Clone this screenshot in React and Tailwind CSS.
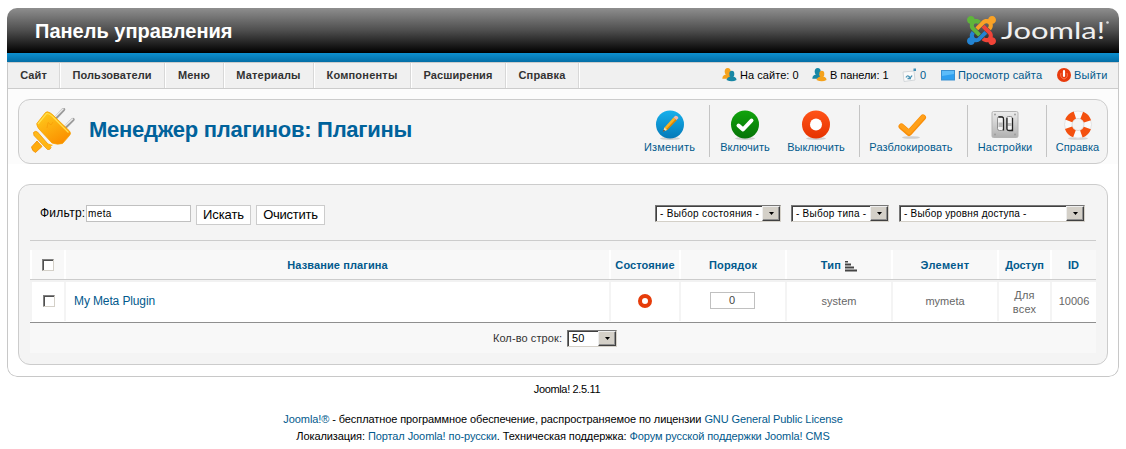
const menu = [
  { label: 'Сайт', box: 'w-[52px]', text: 'tracking-[0.1px]' },
  { label: 'Пользователи', box: 'w-[105px]', text: 'tracking-[0.1px]' },
  { label: 'Меню', box: 'w-[59px]', text: 'tracking-[0.2px]' },
  { label: 'Материалы', box: 'w-[90px]', text: 'tracking-[0.15px]' },
  { label: 'Компоненты', box: 'w-[97px]', text: 'tracking-[0.2px]' },
  { label: 'Расширения', box: 'w-[95px]', text: 'tracking-[0.1px]' },
  { label: 'Справка', box: 'w-[73px]', text: 'tracking-[0.2px]' },
];

function JoomlaMark() {
  return (
    <svg viewBox="0 32 448 448" className="h-[29px] w-[29px]">
      <path fill="#5fb53b" d="M.6 92.1C.6 58.8 27.4 32 60.4 32c30 0 54.5 21.900 59.200 50.200 32.600-7.600 67.100.6 96.500 30l-44.300 44.300c-20.500-20.500-42.600-16.300-55.400-3.500-14.300 14.300-14.300 37.900 0 52.200l99.500 99.500-44 44.300c-87.700-87.200-49.700-49.700-99.800-99.700-26.800-26.500-35-64.800-24.800-98.900C20.400 144.600.6 120.700.6 92.100z" />
      <path fill="#f9a226" d="M130.100 208.500l44.300 44.300c10-10 89.700-89.700 99.700-99.800 14.300-14.300 37.600-14.300 51.900 0 12.800 12.800 17 35-3.500 55.400l44 44.300c31.200-31.200 38.500-67.600 28.900-101.200 29.200-4.100 51.900-29.200 51.900-59.500 0-33.200-26.800-60.100-59.800-60.100-30.300 0-55.400 22.500-59.500 51.600-33.800-9.900-71.700-1.500-98.300 25.100-18.300 19.100-71.100 71.500-99.600 99.900z" />
      <path fill="#f04438" d="M396.400 360.700c8.200-32.700-.9-68.500-26.300-93.900-11.800-12.200 5 4.700-99.500-99.700l-44.300 44.300 99.700 99.700c14.300 14.300 14.300 37.600 0 51.900-12.800 12.800-35 17-55.400-3.500l-44 44.300c27.600 30.200 68 38.800 102.700 28 5.500 27.400 29.700 48.100 58.900 48.100 33 0 59.800-26.800 59.800-60.100 0-30.200-22.500-55-51.600-59.100z" />
      <path fill="#2384d3" d="M312.100 307.600l-44-44.300c-87 86.400-50.400 50.400-99.700 99.800-14.300 14.300-37.600 14.300-51.900 0-13.100-13.400-16.900-35.300 3.200-55.400l-44-44.300c-30.200 30.200-38 65.200-29.500 98.300-26.700 6-46.200 29.900-46.200 58.200C0 453.200 26.800 480 59.800 480c28.600 0 52.500-19.800 58.600-46.700 32.700 8.200 68.500-.6 94.200-26 32.100-32 12.200-12.400 99.500-99.700z" />
    </svg>
  );
}

function PlugIcon() {
  return (
    <svg viewBox="4 7 48 48" className="h-12 w-12">
      <defs>
        <linearGradient id="plug" x1="0" y1="0" x2="0.6" y2="1">
          <stop offset="0" stopColor="#ffcf1f" />
          <stop offset="1" stopColor="#fb9100" />
        </linearGradient>
      </defs>
      <g stroke="#9a9a9a" strokeWidth="3.400" strokeLinecap="round">
        <path d="M32 16.500 L39.500 8.500" />
        <path d="M41.500 26 L49 18.500" />
      </g>
      <g stroke="#ececec" strokeWidth="1.600" strokeLinecap="round">
        <path d="M31.500 15.500 L39 8" />
        <path d="M41 25 L48.500 18" />
      </g>
      <path d="M13 40 L7.500 46 Q8 50 11.500 51.500 L18 45.500 Z" fill="#ffab0c" stroke="#f08c00" strokeWidth="0.800" />
      <path d="M9.500 31.500 Q11.500 29.500 13.500 31 L27 46.500 Q26.500 49 23.500 48.500 L10 34.500 Z" fill="#ffb91a" stroke="#f39400" strokeWidth="0.800" />
      <path d="M12.700 22.700 L21.500 11.500 Q23 10 26 11.800 Q29 13.500 31 16 L45.500 30 Q47.500 32.500 45.500 34.500 L38.500 42.500 Q33 44 28 42 L14.500 27.500 Q13 25 12.700 22.700 Z" fill="url(#plug)" stroke="#f6a000" strokeWidth="0.800" />
      <path d="M12 33 L19 41 L29 44 L24 47.500 Z" fill="#ffb414" />
      <path d="M12 43 L17 46" stroke="#ffab0c" strokeWidth="3" />
      <path d="M14 23 L22.500 12.500 Q26 12.500 30 17 L44.500 31.500" fill="none" stroke="#ffe04e" strokeWidth="1.200" />
      <path d="M23 27 L24 21.500 L27 24 L29 21" fill="none" stroke="#f28a00" strokeWidth="0.800" opacity="0.500" />
    </svg>
  );
}

function Users({ flip }) {
  const a = flip ? '#1787a5' : '#f5a21c';
  const b = flip ? '#f5a21c' : '#1787a5';
  return (
    <svg viewBox="0 0 15 14" className="h-[14px] w-[15px] shrink-0 -translate-y-px">
      <ellipse cx="5.700" cy="3.600" rx="3" ry="3.600" fill={a} />
      <path d="M0.300 10.700 Q0.500 7 4 6.500 H7 Q10 7 10 10.700 Z" fill={a} />
      <ellipse cx="9.800" cy="6" rx="2.500" ry="3.200" fill={b} />
      <path d="M4.500 12 Q5 9 8.500 8.500 H11 Q14.500 9 14.500 12 Q10 14.500 4.500 12 Z" fill={b} />
    </svg>
  );
}

function MailIcon() {
  return (
    <svg viewBox="0 0 15 14" className="h-[14px] w-[15px] shrink-0 -translate-y-px">
      <path d="M1 4 L12 3 L13 12 L2 13.500 Z" fill="#fafafa" stroke="#d3d7da" />
      <path d="M4 9.500 Q5 7 7 8.500 Q8.500 10.500 10 7.500 M5.500 10.500 H9" fill="none" stroke="#4b94b5" strokeWidth="1.300" />
      <rect x="11.500" y="0.500" width="2.500" height="2.500" fill="#3f8fb6" />
    </svg>
  );
}

function ScreenIcon() {
  return (
    <svg viewBox="0 0 14 11" className="h-[11px] w-[14px] shrink-0">
      <rect x="0.500" y="0.500" width="13" height="9.500" fill="#2f9ff0" stroke="#3a8fd0" />
      <path d="M1 1 H13 V4 L1 6 Z" fill="#5cbcfa" />
    </svg>
  );
}

function PowerIcon() {
  return (
    <svg viewBox="0 0 14 14" className="h-[14px] w-[14px] shrink-0 -translate-y-px">
      <circle cx="7" cy="7" r="7" fill="#e83a0c" />
      <path d="M7 3 V8" stroke="#fff" strokeWidth="2.200" strokeLinecap="round" />
      <path d="M4 5 Q2.500 9.500 7 11 Q11.500 9.500 10 5" fill="none" stroke="#ff8a63" strokeWidth="0.800" />
    </svg>
  );
}

function Disc({ id, from, to, children }) {
  return (
    <svg viewBox="0 0 32 32" className="h-8 w-8">
      <defs>
        <linearGradient id={id} x1="0" y1="0" x2="0" y2="1">
          <stop offset="0" stopColor={from} />
          <stop offset="1" stopColor={to} />
        </linearGradient>
      </defs>
      <ellipse cx="16" cy="29.500" rx="10" ry="1.500" fill="#cfcfcf" />
      <circle cx="16" cy="15.500" r="14" fill={`url(#${id})`} />
      {children}
    </svg>
  );
}

const EditIcon = () => (
  <Disc id="edit" from="#16b0ec" to="#0579b8">
    <path d="M9 22.500 L10.500 18.500 L19.500 8.500 L22.500 11 L13 21 Z" fill="#fbb321" />
    <path d="M12 20.500 L21.700 10 L22.700 11.200 L13.200 21 Z" fill="#d98304" />
    <path d="M19.500 8.500 L21.300 6.700 Q24.500 6.700 24.300 9.300 L22.500 11 Z" fill="#eeb6ad" />
    <path d="M9 22.500 L10.500 18.500 L13 21 Z" fill="#f0dcb4" />
    <path d="M8.800 22.700 L9.700 20.600 L11 21.800 Z" fill="#333" />
  </Disc>
);

const EnableIcon = () => (
  <Disc id="enable" from="#11a40d" to="#067307">
    <path d="M9.500 16.500 L14 20.500 L22.500 11.500" fill="none" stroke="#fff" strokeWidth="4" strokeLinecap="round" strokeLinejoin="round" />
  </Disc>
);

const DisableIcon = () => (
  <Disc id="disable" from="#ff5318" to="#e63300">
    <circle cx="16" cy="15.500" r="6" fill="#fff" />
  </Disc>
);

const CheckinIcon = () => (
  <svg viewBox="0 0 32 32" className="h-8 w-8">
    <ellipse cx="16" cy="28.500" rx="9" ry="1.300" fill="#cfcfcf" />
    <path d="M6.500 17.500 L14 24 L28 8.500" fill="none" stroke="#f98f0a" strokeWidth="6" strokeLinecap="round" strokeLinejoin="round" />
    <path d="M6.500 17 L14 23.300 L28 8" fill="none" stroke="#ffa01a" strokeWidth="4" strokeLinecap="round" strokeLinejoin="round" />
  </svg>
);

const OptionsIcon = () => (
  <svg viewBox="0 0 32 32" className="h-8 w-8">
    <defs>
      <linearGradient id="plate" x1="0" y1="0" x2="0" y2="1">
        <stop offset="0" stopColor="#ececec" />
        <stop offset="1" stopColor="#b0b0b0" />
      </linearGradient>
    </defs>
    <rect x="3" y="2.500" width="26" height="26" rx="1.500" fill="url(#plate)" stroke="#b4b4b4" />
    <g fill="#999">
      <circle cx="6" cy="5.500" r="0.900" /><circle cx="26" cy="5.500" r="0.900" />
      <circle cx="6" cy="25.500" r="0.900" /><circle cx="26" cy="25.500" r="0.900" />
    </g>
    <g fill="#f2f2f2" stroke="#777" strokeWidth="0.800">
      <rect x="8.500" y="7.500" width="6" height="14" rx="2" />
      <rect x="17.500" y="7.500" width="6" height="14" rx="2" />
    </g>
    <path d="M9.500 13.500 H13.500 V18 H9.500 Z M18.500 14 H22.500 V17 H18.500 Z" fill="#bcbcbc" />
    <path d="M9.500 8 H13 Q14.500 8 14.500 10 V21.500 M18 9 V20 Q18 21.500 20 21.500 H23.500 V9" fill="none" stroke="#222" strokeWidth="1.300" />
  </svg>
);

const HelpIcon = () => (
  <svg viewBox="0 0 32 32" className="h-8 w-8">
    <ellipse cx="16" cy="29.500" rx="10" ry="1.300" fill="#d2d2d2" />
    <circle cx="16" cy="15.500" r="10" fill="none" stroke="#fafafa" strokeWidth="7.500" />
    <circle cx="16" cy="15.500" r="13.500" fill="none" stroke="#d8d8d8" strokeWidth="0.700" />
    <circle cx="16" cy="15.500" r="6" fill="none" stroke="#cfcfcf" strokeWidth="0.700" />
    <circle cx="16" cy="15.500" r="10" fill="none" stroke="#f4510f" strokeWidth="7.500" strokeDasharray="8.700 7.008" strokeDashoffset="-3.500" />
  </svg>
);

function Tool({ icon, label, box, text }) {
  return (
    <div className={`flex shrink-0 flex-col items-center pt-[9px] ${box}`}>
      {icon}
      <span className={`-mt-px text-[11px] leading-[14px] whitespace-nowrap text-[#025a8d] ${text}`}>{label}</span>
    </div>
  );
}

const Divider = () => <div className="mt-[5px] h-[52px] w-px shrink-0 bg-[#c4c4c4]" />;

function Select({ label, box, text }) {
  return (
    <div className={`flex h-[17px] shrink-0 border border-t-[#777] border-r-[#d4d0c8] border-b-[#d4d0c8] border-l-[#777] bg-white ${box}`}>
      <div className="flex min-w-0 flex-1 items-center border-t border-l border-[#404040] pl-[3px]">
        <span className={`leading-none whitespace-nowrap text-black ${text}`}>{label}</span>
      </div>
      <div className="flex w-[18px] items-center justify-center border border-t-[#eee] border-r-[#404040] border-b-[#404040] border-l-[#eee] bg-[#d4d0c8] shadow-[inset_-1px_-1px_0_#909090]">
        <svg viewBox="0 0 5 3" className="h-[3px] w-[5px]"><path d="M0 0 H5 L2.500 3 Z" fill="#000" /></svg>
      </div>
    </div>
  );
}

const Checkbox = () => (
  <span className="block h-3 w-3 border border-t-[#808080] border-r-[#d4d0c8] border-b-[#d4d0c8] border-l-[#808080] bg-white shadow-[inset_1px_1px_0_#505050]" />
);

function Cell({ box, head, children }) {
  return (
    <div
      className={`flex shrink-0 items-center justify-center border-l-2 text-center text-[11px] ${box} ${
        head ? 'border-[#fff] pt-px font-bold text-[#025a8d]' : 'border-[#f4f4f4] text-[#666]'
      }`}
    >
      {children}
    </div>
  );
}

export default function App() {
  return (
    <div className="h-[449px] w-[1126px] overflow-hidden bg-white pt-2 pl-[7px] font-['Liberation_Sans',Arial,sans-serif] text-[11px] text-black">
      <div className="flex h-[369px] w-[1112px] flex-col overflow-hidden rounded-[10px] bg-white">
        <header className="flex h-[45px] shrink-0 items-center justify-between bg-linear-to-b/srgb from-[#8e8e8e] via-[#4e4e4e] to-black pr-[7px] pl-7">
          <h1 className="text-[20px] leading-none font-bold whitespace-nowrap text-white">Панель управления</h1>
          <div className="flex items-center gap-1">
            <JoomlaMark />
            <svg viewBox="0 0 112 40" className="h-[40px] w-[112px]">
              <text x="1" y="28" textLength="104" lengthAdjust="spacingAndGlyphs" fill="#f0f0f0" className="font-[Lato] text-[24px]">Joomla!</text>
              <circle cx="107.500" cy="11.500" r="1.300" fill="#ddd" />
            </svg>
          </div>
        </header>
        <div className="h-[9px] shrink-0 bg-linear-to-b from-[#0d8fcf] to-[#046ea6]" />

        <div className="flex min-h-0 flex-1 flex-col rounded-b-[10px] border border-t-0 border-[#c8c8c8]">
          <nav className="flex h-[27px] shrink-0 border-t border-b border-[#ccc] bg-[#f0f0f0]">
            {menu.map((m) => (
              <div key={m.label} className={`flex items-center justify-center border-r border-[#d8d8d8] font-bold text-[#333] shadow-[1px_0_0_#fff] ${m.box}`}>
                <span className={`text-[11px] whitespace-nowrap ${m.text}`}>{m.label}</span>
              </div>
            ))}
            <div className="ml-[143px] flex items-center">
              <div className="flex w-[90px] items-center gap-[3px]"><Users /><span className="whitespace-nowrap tracking-[0.05px]">На сайте: 0</span></div>
              <div className="flex w-[90px] items-center gap-[3px]"><Users flip /><span className="whitespace-nowrap tracking-[-0.05px]">В панели: 1</span></div>
              <div className="flex w-[39px] items-center gap-[3px] text-[#025a8d]"><MailIcon />0</div>
              <div className="flex w-[116px] items-center gap-[3px] text-[#025a8d]"><ScreenIcon /><span className="whitespace-nowrap tracking-[0.15px]">Просмотр сайта</span></div>
              <div className="flex items-center gap-[3px] text-[#025a8d]"><PowerIcon /><span className="whitespace-nowrap tracking-[0.2px]">Выйти</span></div>
            </div>
          </nav>

          <div className="shrink-0 bg-[#fcfcfc] px-[10px] pt-[10px]">
            <section className="flex h-[65px] rounded-[12px] border border-[#ccc] bg-[#f4f4f4]">
              <div className="flex w-[606px] shrink-0 items-center pl-[9px]">
                <PlugIcon />
                <h2 className="ml-[13px] pb-[3px] text-[22px] leading-none font-bold tracking-[-0.26px] whitespace-nowrap text-[#00629b]">Менеджер плагинов: Плагины</h2>
              </div>
              <Tool icon={<EditIcon />} label="Изменить" box="ml-[5px] w-[79px]" text="tracking-[0.2px]" />
              <Divider />
              <Tool icon={<EnableIcon />} label="Включить" box="w-[70px]" text="tracking-[0.05px]" />
              <Tool icon={<DisableIcon />} label="Выключить" box="w-[72px]" text="tracking-[0.05px]" />
              <div className="w-[7px] shrink-0" />
              <Divider />
              <Tool icon={<CheckinIcon />} label="Разблокировать" box="w-[102px]" text="tracking-[0.1px]" />
              <div className="w-[5px] shrink-0" />
              <Divider />
              <Tool icon={<OptionsIcon />} label="Настройки" box="w-[74px]" text="tracking-[0.05px]" />
              <div className="w-[4px] shrink-0" />
              <Divider />
              <Tool icon={<HelpIcon />} label="Справка" box="w-[61px]" text="tracking-[0.05px]" />
            </section>
          </div>

          <div className="px-[10px] pt-5">
            <section className="h-[181px] rounded-[12px] border border-[#ccc] bg-[#f4f4f4] px-[11px] pt-5">
              <div className="flex h-9 items-start border-b border-[#ccc] pl-[10px]">
                <label className="w-[46px] shrink-0 pt-[1px] text-[12px] leading-[15px] tracking-[0.25px] whitespace-nowrap">Фильтр:</label>
                <div className="h-[17px] w-[105px] shrink-0 border border-[#c0c0c0] bg-white pl-px text-[10px] leading-[15px] tracking-[0.4px]">meta</div>
                <div className="ml-[5px] flex h-5 w-[55px] shrink-0 items-center justify-center border border-[#ccc] bg-white text-[13px] tracking-[-0.1px] whitespace-nowrap">Искать</div>
                <div className="ml-[5px] flex h-5 w-[69px] shrink-0 items-center justify-center border border-[#ccc] bg-white text-[13px] tracking-[-0.25px] whitespace-nowrap">Очистить</div>
                <div className="ml-[330px] flex gap-[10px]">
                  <Select label="- Выбор состояния -" box="w-[126px]" text="text-[10px] tracking-[0.3px]" />
                  <Select label="- Выбор типа -" box="w-[98px]" text="text-[10px] tracking-[0.25px]" />
                  <Select label="- Выбор уровня доступа -" box="w-[186px]" text="text-[10px] tracking-[0.2px]" />
                </div>
              </div>

              <div className="mt-[9px]">
                <div className="flex h-[30px] border-b border-[#ccc] bg-[#f8f8f8]">
                  <Cell head box="w-[34px]"><Checkbox /></Cell>
                  <Cell head box="w-[545px]"><span className="tracking-[0.1px]">Название плагина</span></Cell>
                  <Cell head box="w-[70px]"><span className="tracking-[0.1px]">Состояние</span></Cell>
                  <Cell head box="w-[106px]"><span className="tracking-[0.2px]">Порядок</span></Cell>
                  <Cell head box="w-[106px]">
                    <span className="tracking-[0.2px]">Тип</span>
                    <svg viewBox="0 0 12 11" className="ml-1 h-[11px] w-3 translate-y-px">
                      <path d="M0 0.500 H3 M0 3.500 H6 M0 6.500 H9 M0 9.500 H12" stroke="#444" strokeWidth="1.800" />
                    </svg>
                  </Cell>
                  <Cell head box="w-[106px]"><span className="tracking-[0.3px]">Элемент</span></Cell>
                  <Cell head box="w-[53px]"><span className="tracking-[-0.1px]">Доступ</span></Cell>
                  <Cell head box="w-[45px]">ID</Cell>
                </div>
                <div className="flex h-[43px] border-t-2 border-b border-t-[#f2f2f2] border-b-[#8f8f8f] bg-white pb-px">
                  <Cell box="w-[36px]"><div className="pb-[2px]"><Checkbox /></div></Cell>
                  <Cell box="-ml-[2px] w-[545px]"><span className="mr-auto pb-px pl-2 text-[12px] tracking-[-0.12px] text-[#025a8d]">My Meta Plugin</span></Cell>
                  <Cell box="w-[70px]">
                    <svg viewBox="0 0 14 14" className="-mt-[2px] h-[14px] w-[14px]"><circle cx="7" cy="7" r="5" fill="#fff" stroke="#e63c0a" strokeWidth="4" /></svg>
                  </Cell>
                  <Cell box="w-[104px]"><div className="mt-[-2px] h-[17px] w-[45px] border border-[#c0c0c0] bg-white leading-[15px] text-[#444]">0</div></Cell>
                  <Cell box="ml-[2px] w-[106px]">system</Cell>
                  <Cell box="w-[106px]">mymeta</Cell>
                  <Cell box="w-[53px]"><span className="leading-[14px] tracking-[0.2px]">Для<br />всех</span></Cell>
                  <Cell box="w-[46px]">10006</Cell>
                </div>
                <div className="flex h-[30px] items-center justify-center gap-[5px] bg-[#f8f8f8] pr-[16px] text-[#333]">
                  <span className="tracking-[0.1px]">Кол-во строк:</span>
                  <Select label="50" box="w-[50px]" text="text-[11px]" />
                </div>
              </div>
            </section>
          </div>
        </div>
      </div>

      <footer className="w-[1112px] text-center leading-[17px] text-black">
        <p className="pt-1 pl-2 tracking-[-0.35px]">Joomla! 2.5.11</p>
        <p className="pt-[13px] tracking-[-0.09px] whitespace-nowrap">
          <span className="text-[#025a8d]">Joomla!®</span> - бесплатное программное обеспечение, распространяемое по лицензии <span className="text-[#025a8d]">GNU General Public License</span>
        </p>
        <p className="tracking-[-0.09px] whitespace-nowrap">
          Локализация: <span className="text-[#025a8d]">Портал Joomla! по-русски</span>. Техническая поддержка: <span className="text-[#025a8d]">Форум русской поддержки Joomla! CMS</span>
        </p>
      </footer>
    </div>
  );
}
